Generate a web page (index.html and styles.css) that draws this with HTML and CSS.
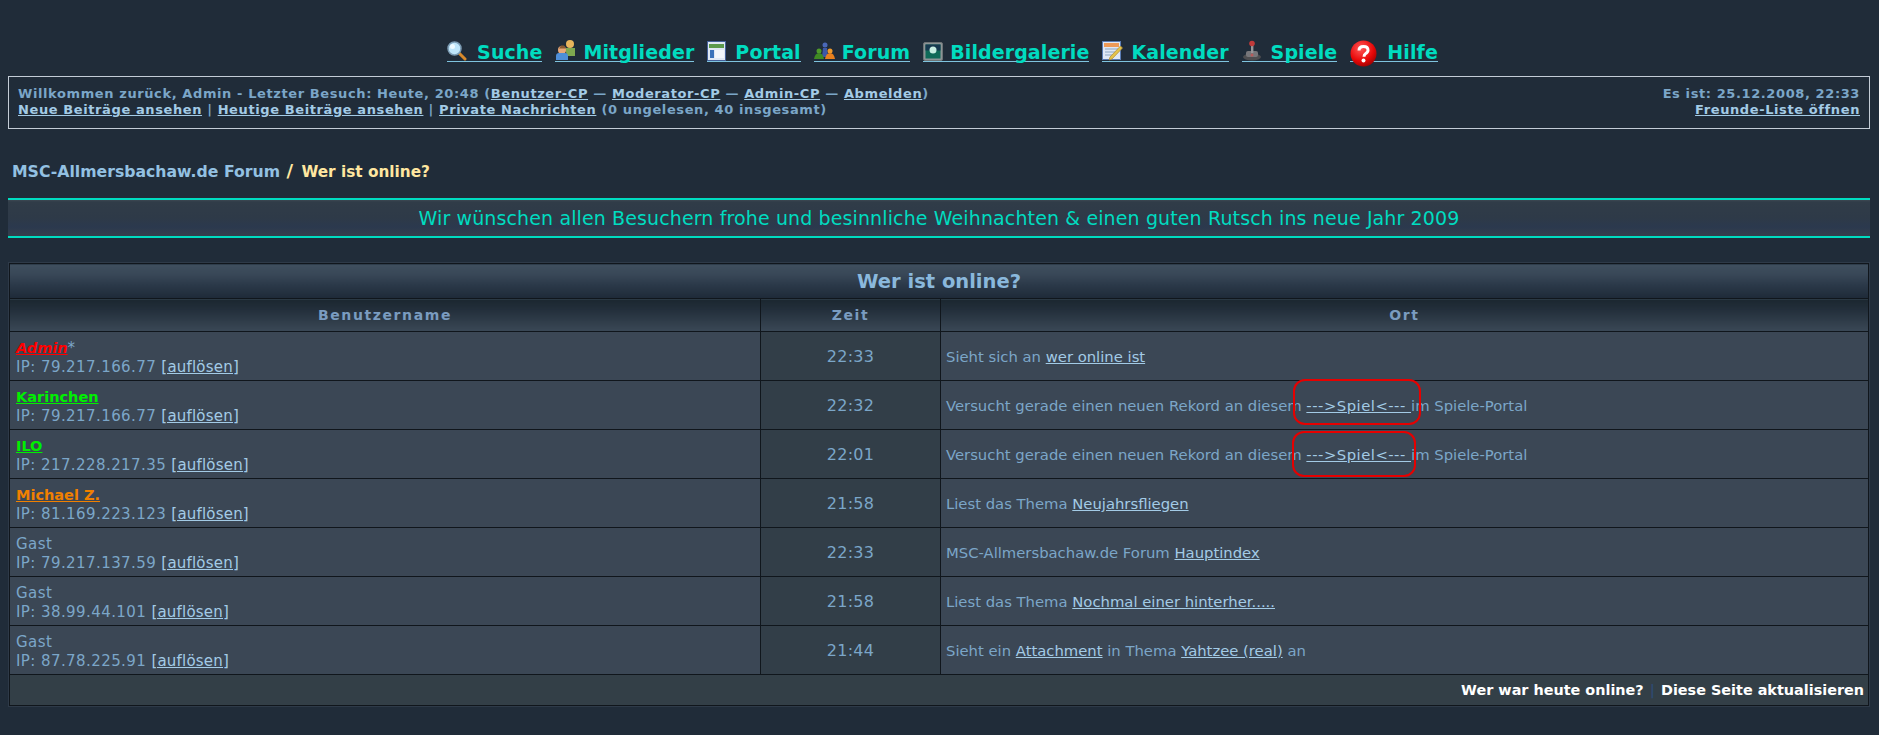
FILE: index.html
```html
<!DOCTYPE html>
<html lang="de">
<head>
<meta charset="utf-8">
<title>Wer ist online?</title>
<link rel="stylesheet" href="styles.css">
</head>
<body>
<nav class="nav">
  <a href="#" class="g10"><svg class="ico" width="20" height="20" viewBox="0 0 20 20"><path d="M11 11l7 7" stroke="#d98a2b" stroke-width="3" stroke-linecap="round"/><circle cx="7.5" cy="7.5" r="6.5" fill="#bfe6fb" stroke="#7c9cb4" stroke-width="1.5"/><circle cx="5.5" cy="5.5" r="2.5" fill="#eefaff"/></svg><span>Suche</span></a>
  <a href="#" class="g6"><svg class="ico" width="22" height="22" viewBox="0 0 22 22"><circle cx="15" cy="5" r="4" fill="#e8b55c"/><path d="M10 9h10v8h-8z" fill="#7fa84f"/><circle cx="7" cy="11" r="4" fill="#e8a878"/><path d="M6 6.500h3l2 3H4z" fill="#8a5a30"/><path d="M1 21v-4q0-3 3-3h6q3 0 3 3v4z" fill="#4f8fd8"/></svg><span>Mitglieder</span></a>
  <a href="#" class="g9"><svg class="ico" width="19" height="20" viewBox="0 0 19 20"><rect x=".5" y=".5" width="18" height="19" fill="#dfe8f4" stroke="#45619a"/><rect x="2" y="3" width="15" height="4" fill="#5c9a4c"/><rect x="3" y="9" width="4" height="8" fill="#3a72ba"/><rect x="8" y="9" width="9" height="8" fill="#f2f6fb"/></svg><span>Portal</span></a>
  <a href="#" class="g6"><svg class="ico" width="22" height="20" viewBox="0 0 22 20"><circle cx="11" cy="4" r="2.500" fill="#4a68b8"/><path d="M8 16l1-9h4l1 9z" fill="#3d58a8"/><circle cx="5" cy="10" r="2.500" fill="#4e9a2a"/><path d="M0 18q1-6 5-6t5 6z" fill="#3f8a22"/><circle cx="16" cy="10" r="2.500" fill="#f09a2c"/><path d="M11 18q1-6 5-6t5 6z" fill="#e8801e"/></svg><span>Forum</span></a>
  <a href="#" class="g7"><svg class="ico" width="20" height="19" viewBox="0 0 20 19"><rect x=".5" y=".5" width="19" height="18" rx="1.500" fill="#8d9496" stroke="#6d7476"/><rect x="2.500" y="2.500" width="15" height="14" fill="#0f6a58"/><rect x="2.500" y="2.500" width="15" height="6" fill="#16394f"/><circle cx="10" cy="8" r="3.500" fill="#c8eee2"/></svg><span>Bildergalerie</span></a>
  <a href="#" class="g8"><svg class="ico" width="21" height="20" viewBox="0 0 21 20"><rect x=".5" y=".5" width="18" height="18" fill="#dfe8f6" stroke="#5a7cb4"/><rect x="2" y="2" width="15" height="4" fill="#ee9a58"/><path d="M3 8h13M3 11h13M3 14h9" stroke="#a8bcd4" stroke-width="1.500"/><path d="M18.500 5l2 2L10 18l-3 1 1-3z" fill="#e4c44c" stroke="#b08a34" stroke-width=".7"/></svg><span>Kalender</span></a>
  <a href="#" class="g9"><svg class="ico" width="20" height="21" viewBox="0 0 20 21"><ellipse cx="10" cy="17" rx="9" ry="3.500" fill="#4d4d50"/><rect x="4" y="11" width="12" height="6" rx="2" fill="#77767a"/><rect x="9" y="4" width="2.400" height="9" fill="#97979a"/><circle cx="10" cy="3.500" r="2.800" fill="#c03a3a"/><circle cx="10" cy="15" r="1.500" fill="#b85a5a"/></svg><span>Spiele</span></a>
  <a href="#" class="help g10"><svg class="ico" width="27" height="27" viewBox="0 0 27 27"><defs><radialGradient id="r" cx=".4" cy=".3" r=".8"><stop offset="0" stop-color="#ff5a5a"/><stop offset=".6" stop-color="#e80808"/><stop offset="1" stop-color="#8c0000"/></radialGradient></defs><circle cx="13.500" cy="13.500" r="13" fill="url(#r)"/><path d="M9 10.500q0-4 4.500-4t4.500 3.800q0 2-2.500 3.400-1.500.9-1.500 3" fill="none" stroke="#fff" stroke-width="3"/><circle cx="13.500" cy="20.500" r="2" fill="#fff"/></svg><span>Hilfe</span></a>
</nav>

<section class="welcome">
  <div>
    <div>Willkommen zurück, Admin - Letzter Besuch: Heute, 20:48 (<a href="#">Benutzer-CP</a> — <a href="#">Moderator-CP</a> — <a href="#">Admin-CP</a> — <a href="#">Abmelden</a>)</div>
    <div><a href="#">Neue Beiträge ansehen</a> | <a href="#">Heutige Beiträge ansehen</a> | <a href="#">Private Nachrichten</a> (0 ungelesen, 40 insgesamt)</div>
  </div>
  <div class="right">
    <div>Es ist: 25.12.2008, 22:33</div>
    <div><a href="#">Freunde-Liste öffnen</a></div>
  </div>
</section>

<div class="crumb"><a href="#">MSC-Allmersbachaw.de Forum</a> <b><span class="slash">/</span> Wer ist online?</b></div>

<div class="banner">Wir wünschen allen Besuchern frohe und besinnliche Weihnachten &amp; einen guten Rutsch ins neue Jahr 2009</div>

<div class="wrap">
<table class="online">
  <colgroup><col class="c1"><col class="c2"><col class="c3"></colgroup>
  <thead>
    <tr><th colspan="3" class="title">Wer ist online?</th></tr>
    <tr class="heads"><th>Benutzername</th><th>Zeit</th><th>Ort</th></tr>
  </thead>
  <tbody>
    <tr><td class="who"><a href="#" class="u admin">Admin</a>*<br>IP: 79.217.166.77 <a href="#">[auflösen]</a></td><td class="time">22:33</td><td>Sieht sich an <a href="#">wer online ist</a></td></tr>
    <tr><td class="who"><a href="#" class="u green">Karinchen</a><br>IP: 79.217.166.77 <a href="#">[auflösen]</a></td><td class="time">22:32</td><td>Versucht gerade einen neuen Rekord an diesem <a href="#" class="game">---&gt;Spiel&lt;--- </a>im Spiele-Portal</td></tr>
    <tr><td class="who"><a href="#" class="u green">ILO</a><br>IP: 217.228.217.35 <a href="#">[auflösen]</a></td><td class="time">22:01</td><td>Versucht gerade einen neuen Rekord an diesem <a href="#" class="game">---&gt;Spiel&lt;--- </a>im Spiele-Portal</td></tr>
    <tr><td class="who"><a href="#" class="u orange">Michael Z.</a><br>IP: 81.169.223.123 <a href="#">[auflösen]</a></td><td class="time">21:58</td><td>Liest das Thema <a href="#">Neujahrsfliegen</a></td></tr>
    <tr><td class="who">Gast<br>IP: 79.217.137.59 <a href="#">[auflösen]</a></td><td class="time">22:33</td><td>MSC-Allmersbachaw.de Forum <a href="#">Hauptindex</a></td></tr>
    <tr><td class="who">Gast<br>IP: 38.99.44.101 <a href="#">[auflösen]</a></td><td class="time">21:58</td><td>Liest das Thema <a href="#">Nochmal einer hinterher.....</a></td></tr>
    <tr><td class="who">Gast<br>IP: 87.78.225.91 <a href="#">[auflösen]</a></td><td class="time">21:44</td><td>Sieht ein <a href="#">Attachment</a> in Thema <a href="#">Yahtzee (real)</a> an</td></tr>
  </tbody>
  <tfoot>
    <tr><td colspan="3" class="foot"><a href="#">Wer war heute online?</a><i>|</i><a href="#">Diese Seite aktualisieren</a></td></tr>
  </tfoot>
</table>
</div>

<div class="mark m1"></div>
<div class="mark m2"></div>
</body>
</html>
```

FILE: styles.css
```css
html, body { margin: 0; padding: 0; }
body {
  position: relative;
  background: #202c39;
  color: #7ba6c8;
  font-family: "DejaVu Sans", Verdana, sans-serif;
  padding: 0 9px 0 8px;
  height: 735px;
  box-sizing: border-box;
  overflow: hidden;
}
a { color: #a3cbe6; }

.nav {
  display: flex;
  justify-content: center;
  gap: 13px;
  padding: 40px 0 0 7px;
  height: 36px;
  font-size: 19px;
  letter-spacing: .1px;
  font-weight: bold;
  line-height: 20px;
}
.nav a {
  display: flex;
  align-items: flex-end;
  height: 21px;
  color: #00dcc0;
  text-decoration: none;
  border-bottom: 1px solid #7fc4df;
}
.nav a span { position: relative; top: 1px; }
.nav .ico { display: block; flex: none; }
.g6 .ico { margin-right: 6px; }
.g7 .ico { margin-right: 7px; }
.g8 .ico { margin-right: 8px; }
.g9 .ico { margin-right: 9px; }
.g10 .ico { margin-right: 10px; }
.nav .help .ico { margin-bottom: -6px; }

.welcome {
  display: flex;
  justify-content: space-between;
  height: 53px;
  box-sizing: border-box;
  border: 1px solid #c3ccd6;
  padding: 9px 9px 0 9px;
  font-size: 13px;
  line-height: 16px;
  font-weight: bold;
  letter-spacing: .6px;
}
.right { text-align: right; }

.crumb {
  margin-top: 32px;
  padding-left: 4px;
  height: 37px;
  font-size: 15.700px;
  line-height: 20px;
  font-weight: bold;
}
.crumb a { text-decoration: none; color: #93c1e2; }
.crumb b { color: #ffe7a0; font-size: 15.300px; }
.slash { margin: 0 3px 0 1px; font-size: 18px; }

.banner {
  height: 40px;
  box-sizing: border-box;
  border-top: 2px solid #00dcc0;
  border-bottom: 2px solid #00dcc0;
  background: linear-gradient(#3d4852 0, #303c48 2px, #2e3a48 50%, #2b394e 75%, #353f4c 100%);
  color: #00dcc0;
  text-align: center;
  font-size: 19px;
  letter-spacing: .12px;
  line-height: 36px;
}

.wrap {
  margin-top: 24px;
  border: 1px solid #2e3a48;
}
.online {
  width: 100%;
  table-layout: fixed;
  border-collapse: collapse;
  border: 1px solid #10161c;
  font-size: 14.800px;
  line-height: 18px;
}
.c1 { width: 751px; }
.c2 { width: 180px; }
.online th, .online td { border: 1px solid #10161c; }
.title {
  height: 32px;
  padding: 2px 0 0;
  background: linear-gradient(#3f4f5e 0, #384757 30%, #2b3949 60%, #1e2a38 100%);
  color: #8ab8dc;
  font-size: 19.500px;
}
.heads th {
  height: 32px;
  padding: 0;
  background: linear-gradient(#1b2730 0, #222e3a 30%, #303d4a 70%, #3a4856 100%);
  color: #7a9cc0;
  font-size: 14px;
  letter-spacing: 1.600px;
}
.online tbody td {
  height: 49px;
  padding: 2px 5px 0;
  background: #3b4755;
  box-sizing: border-box;
}
.online tbody .who {
  padding: 3px 5px 0 6px;
  font-size: 15px;
  line-height: 19px;
  letter-spacing: .42px;
}
.who a { letter-spacing: .2px; }
.online tbody .time {
  background: #323e48;
  text-align: center;
  font-size: 16px;
  letter-spacing: .3px;
}
.u { font-weight: bold; font-size: 14.500px; }
.who .u { letter-spacing: 0; }
.admin { color: #ff0000; font-style: italic; }
.green { color: #00f000; }
.orange { color: #f08000; }
.game { letter-spacing: .5px; }
.online .foot {
  height: 30px;
  padding: 0 4px 0 0;
  background: #333f47;
  text-align: right;
  font-weight: bold;
  font-size: 14.400px;
}
.foot a { color: #fff; text-decoration: none; }
.foot i { color: #2e4a70; font-style: normal; margin: 0 6px; }

.mark {
  position: absolute;
  box-sizing: border-box;
  border: 2px solid #e60000;
  border-radius: 12px;
}
.m1 { left: 1293px; top: 379px; width: 128px; height: 46px; }
.m2 { left: 1292px; top: 431px; width: 124px; height: 46px; }
```
